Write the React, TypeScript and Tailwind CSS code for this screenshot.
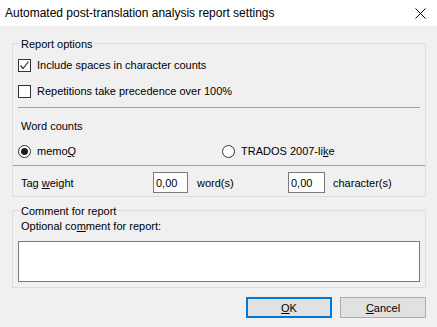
import React, { useState } from "react";

const font = { fontFamily: '"Liberation Sans", Arial, sans-serif' };

const CheckBox: React.FC<{ checked: boolean; onToggle: () => void }> = ({
  checked,
  onToggle,
}) => (
  <button
    type="button"
    onClick={onToggle}
    className="w-[13px] h-[13px] border border-[#333333] bg-white flex items-center justify-center shrink-0"
  >
    {checked && (
      <svg width="11" height="11" viewBox="0 0 11 11">
        <path d="M1.5 5.5 L4 8.5 L9.5 1.5" fill="none" stroke="#333333" strokeWidth="1.2" />
      </svg>
    )}
  </button>
);

const Radio: React.FC<{ checked: boolean; onPick: () => void }> = ({ checked, onPick }) => (
  <button
    type="button"
    onClick={onPick}
    className="w-[13px] h-[13px] rounded-full border border-[#333333] bg-white flex items-center justify-center shrink-0"
  >
    {checked && <span className="w-[7px] h-[7px] rounded-full bg-[#1a1a1a]" />}
  </button>
);

const App: React.FC = () => {
  const [spaces, setSpaces] = useState(true);
  const [reps, setReps] = useState(false);
  const [mode, setMode] = useState<"memoq" | "trados">("memoq");

  return (
    <div className="w-[437px] h-[327px] flex flex-col text-[11px] text-black bg-[#f0f0f0]" style={font}>
      {/* title bar */}
      <div className="h-[26px] bg-white flex items-center justify-between pl-[5px] pr-[11px] shrink-0">
        <span className="text-[12px] leading-[14px]">Automated post-translation analysis report settings</span>
        <svg width="11" height="11" viewBox="0 0 11 11">
          <path d="M0.5 0.5 L10.5 10.5 M10.5 0.5 L0.5 10.5" stroke="#000" strokeWidth="1" />
        </svg>
      </div>

      <div className="flex-1 flex flex-col pl-[12px] pr-[11px]">
        {/* report options group */}
        <div className="relative mt-[17px] border border-[#dcdcdc] flex flex-col">
          <span className="absolute top-[-7px] left-[7px] px-[1px] bg-[#f0f0f0] leading-[14px]">
            Report options
          </span>
          <div className="pt-[8px] pl-[5px]">
            <div className="h-[26px] flex items-center gap-[6px]">
              <CheckBox checked={spaces} onToggle={() => setSpaces(!spaces)} />
              <span className="leading-[14px]">Include spaces in character counts</span>
            </div>
            <div className="h-[26px] flex items-center gap-[6px]">
              <CheckBox checked={reps} onToggle={() => setReps(!reps)} />
              <span className="leading-[14px]">Repetitions take precedence over 100%</span>
            </div>
          </div>
          <div className="mt-[3px] mx-[5px] h-px bg-[#a0a0a0]" />
          <div className="h-[36px] flex items-center pl-[8px] leading-[14px]">Word counts</div>
          <div className="h-[14px] flex items-center pl-[5px]">
            <div className="w-[204px] flex items-center gap-[6px]">
              <Radio checked={mode === "memoq"} onPick={() => setMode("memoq")} />
              <span className="leading-[14px]">
                memo<u>Q</u>
              </span>
            </div>
            <div className="flex items-center gap-[6px]">
              <Radio checked={mode === "trados"} onPick={() => setMode("trados")} />
              <span className="leading-[14px]">
                TRADOS 2007-li<u>k</u>e
              </span>
            </div>
          </div>
          <div className="mt-[7px] h-px bg-[#a0a0a0]" />
          <div className="mt-[6px] mb-[3px] h-[21px] flex items-center pl-[8px]">
            <span className="w-[132px] leading-[14px]">
              Tag <u>w</u>eight
            </span>
            <input
              defaultValue="0,00"
              className="w-[35px] h-[21px] border border-[#7a7a7a] bg-white px-[2px] text-[11px] outline-none"
              style={font}
            />
            <span className="w-[100px] pl-[9px] leading-[14px]">word(s)</span>
            <input
              defaultValue="0,00"
              className="w-[37px] h-[21px] border border-[#7a7a7a] bg-white px-[2px] text-[11px] outline-none"
              style={font}
            />
            <span className="pl-[8px] leading-[14px]">character(s)</span>
          </div>
        </div>

        {/* comment group */}
        <div className="relative mt-[13px] border border-[#dcdcdc] flex flex-col pl-[5px] pr-[5px] pb-[5px]">
          <span className="absolute top-[-7px] left-[7px] px-[1px] bg-[#f0f0f0] leading-[14px]">
            Comment for report
          </span>
          <div className="pt-[8px] pl-[3px] leading-[14px]">
            Optional co<u>m</u>ment for report:
          </div>
          <textarea className="mt-[8px] h-[41px] border border-[#7a7a7a] bg-white resize-none outline-none" />
        </div>

        {/* buttons */}
        <div className="mt-[9px] flex justify-end gap-[8px]">
          <button
            type="button"
            className="w-[86px] h-[21px] border-2 border-[#0078d7] bg-[#e1e1e1] flex items-center justify-center leading-[14px]"
          >
            <span>
              <u>O</u>K
            </span>
          </button>
          <button
            type="button"
            className="w-[86px] h-[21px] border border-[#adadad] bg-[#e1e1e1] flex items-center justify-center leading-[14px]"
          >
            <span>
              <u>C</u>ancel
            </span>
          </button>
        </div>
      </div>
    </div>
  );
};

export default App;
